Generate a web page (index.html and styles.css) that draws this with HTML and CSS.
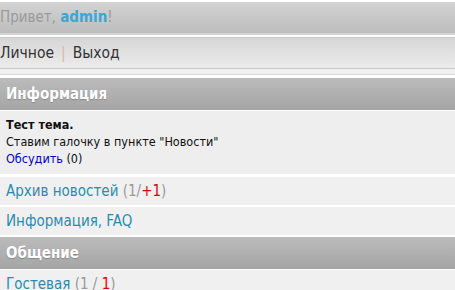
FILE: index.html
```html
<!DOCTYPE html>
<html lang="ru">
<head>
  <meta charset="UTF-8">
  <title>Главная</title>
  <link rel="stylesheet" href="styles.css">
</head>
<body>
  <div class="hello">Привет, <b class="login">admin</b>!</div>
  <div class="menu">
    <a href="#" class="menu-link">Личное</a><span class="sep">|</span><a href="#" class="menu-link">Выход</a>
  </div>
  <div class="menu-strip"></div>

  <div class="title">Информация</div>
  <div class="news">
    <div class="news-head">Тест тема.</div>
    <div class="news-text">Ставим галочку в пункте "Новости"</div>
    <div><a href="#" class="discuss">Обсудить</a> (0)</div>
  </div>
  <div class="row"><a href="#">Архив новостей</a> <span class="cnt">(1/<span class="new">+1</span>)</span></div>
  <div class="row"><a href="#">Информация, FAQ</a></div>

  <div class="title">Общение</div>
  <div class="row"><a href="#">Гостевая</a> <span class="cnt">(1 / <span class="new">1</span>)</span></div>
</body>
</html>
```

FILE: styles.css
```css
body {
  margin: 0;
  padding-top: 2px;
  background: #fff;
  font-family: 'DejaVu Sans Condensed', 'DejaVu Sans', Verdana, sans-serif;
  font-size: 15px;
}

a {
  text-decoration: none;
}

.hello {
  height: 31px;
  line-height: 30px;
  color: #9a9a9a;
  background: linear-gradient(#d3d3d3, #bdbdbd);
  border-bottom: 2px solid #d3d3d3;
  margin-bottom: 2px;
}

.login {
  color: #3da5cf;
}

.menu {
  height: 30px;
  line-height: 30px;
  border-top: 1px solid #c6c6c6;
  border-bottom: 1px solid #c8c8c8;
  background: linear-gradient(#d6d6d6, #ececec);
  font-size: 15.5px;
}

.menu-link {
  color: #333;
}

.sep {
  color: #e0b890;
  margin: 0 7px;
}

.menu-strip {
  height: 5px;
  background: #f0f0f0;
  border-bottom: 1px solid #dadada;
  margin-bottom: 3px;
}

.title {
  height: 32px;
  line-height: 32px;
  padding-left: 6px;
  color: #fff;
  font-weight: bold;
  text-shadow: 0 1px 1px #8a8a8a;
  background: linear-gradient(#bbbbbb, #a5a5a5);
  margin-bottom: 1px;
}

.news {
  background: #eeeeee;
  padding: 5px 6px 7px;
  font-size: 12.5px;
  line-height: 17px;
  color: #111;
  margin-bottom: 3px;
}

.news-head {
  font-weight: bold;
}

.discuss {
  color: #0000cc;
}

.row {
  height: 28px;
  line-height: 28px;
  padding-left: 6px;
  background: #f0f0f0;
  margin-bottom: 2px;
}

.title + .row {
  margin-top: 1px;
}

.row a {
  color: #2a8cb0;
}

.cnt {
  color: #999;
}

.new {
  color: #e00000;
}
```
